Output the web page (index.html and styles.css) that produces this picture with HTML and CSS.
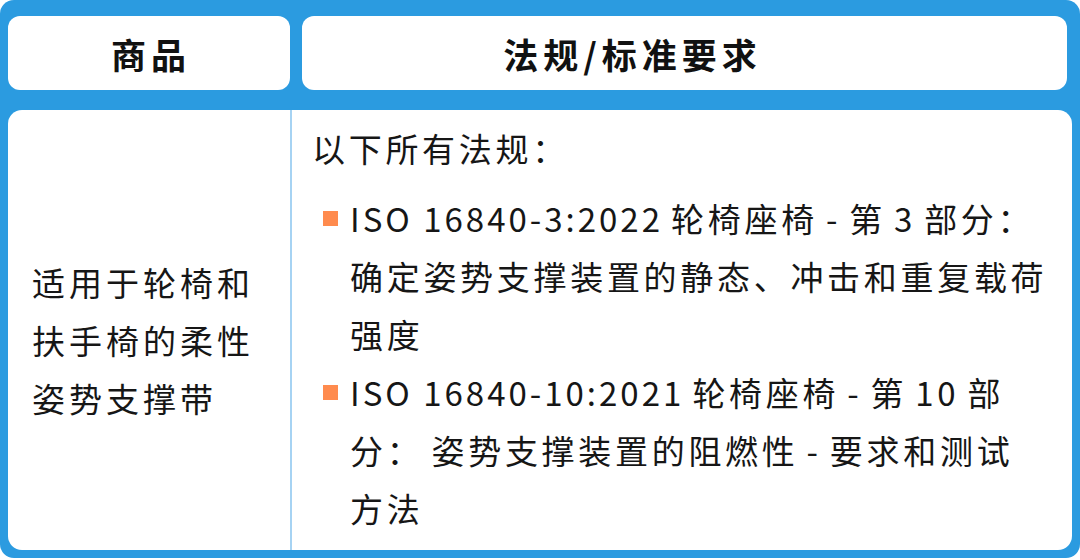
FILE: index.html
```html
<!DOCTYPE html>
<html lang="zh-CN">
<head>
<meta charset="utf-8">
<title>法规/标准要求</title>
<link rel="stylesheet" href="styles.css">
</head>
<body>
<div class="board">
  <div class="head">
    <div class="hcell hcell-goods">商品</div>
    <div class="hcell hcell-req">法规/标准要求</div>
  </div>
  <div class="panel">
    <div class="col-goods">
      <p class="goods-text">适用于轮椅和扶手椅的柔性姿势支撑带</p>
    </div>
    <div class="col-req">
      <p class="intro">以下所有法规：</p>
      <ul class="reqs">
        <li class="req"><span class="mark"></span><span class="req-text"><span class="std">ISO 16840-3:2022</span> 轮椅座椅 - 第 3 部分：<br>确定姿势支撑装置的静态、冲击和重复载荷<br>强度</span></li>
        <li class="req"><span class="mark"></span><span class="req-text"><span class="std">ISO 16840-10:2021</span> 轮椅座椅 - 第 10 部<br>分： 姿势支撑装置的阻燃性 - 要求和测试<br>方法</span></li>
      </ul>
    </div>
  </div>
</div>
</body>
</html>
```
FILE: styles.css
```css
html, body {
  margin: 0;
  padding: 0;
  background: #ffffff;
}

body {
  font-family: "Noto Sans CJK SC", "Noto Sans", sans-serif;
  color: #161616;
}

.board {
  width: 1080px;
  height: 558px;
  box-sizing: border-box;
  background: #2b9be0;
  border-radius: 14px;
  padding: 16px 8px 8px 8px;
  display: flex;
  flex-direction: column;
  gap: 20px;
}

.head {
  display: flex;
  gap: 12px;
  height: 74px;
  margin-right: 5px;
}

.hcell {
  background: #ffffff;
  border-radius: 12px;
  display: flex;
  align-items: center;
  justify-content: center;
  font-weight: 700;
  font-size: 35px;
  letter-spacing: 5px;
  color: #111111;
}

.hcell-goods {
  flex: none;
  width: 282px;
  padding-left: 4px;
  box-sizing: border-box;
}

.hcell-req {
  flex: 1;
  padding-right: 104px;
}

.panel {
  flex: 1;
  background: #ffffff;
  border-radius: 14px;
  display: flex;
}

.col-goods {
  flex: none;
  width: 284px;
  box-sizing: border-box;
  border-right: 2px solid #a6d3f3;
  display: flex;
  align-items: center;
  padding: 20px 0 0 24px;
}

.goods-text {
  margin: 0;
  max-width: 232px;
  font-size: 33px;
  line-height: 58px;
  letter-spacing: 4px;
}

.col-req {
  flex: 1;
  min-width: 0;
  padding: 9px 0 0 20px;
  font-size: 33px;
  line-height: 58px;
  letter-spacing: 3.7px;
  word-spacing: -3px;
}

.intro {
  margin: 0 0 12px 0;
}

.reqs {
  margin: 0;
  padding: 0;
  list-style: none;
}

.req {
  display: flex;
  align-items: flex-start;
  gap: 12px;
}

.mark {
  flex: none;
  width: 15px;
  height: 15px;
  margin: 22px 0 0 11px;
  background: #ff8b4e;
}

.req-text {
  white-space: nowrap;
}

.std {
  letter-spacing: 3px;
  word-spacing: 0;
}
```
